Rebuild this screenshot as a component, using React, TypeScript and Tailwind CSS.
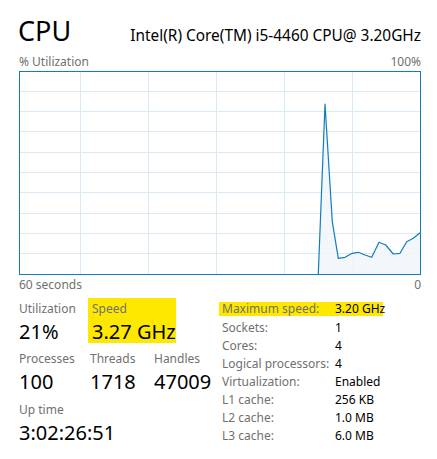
import React from "react";

const pts: [number, number][] = [
  [299.3, 203],
  [306, 33],
  [313.3, 150.7],
  [319.3, 187.3],
  [326, 186.3],
  [333.3, 182.3],
  [339.3, 181.3],
  [346, 184],
  [352.7, 186.3],
  [360, 171.3],
  [366.7, 174],
  [374.3, 183],
  [381, 182.3],
  [387.7, 170.7],
  [394.3, 167.3],
  [401, 161.7],
];

function Chart() {
  const vx = [61.5, 129.5, 197.5, 265.5, 333.5];
  const hy = [20.5, 40.5, 60.5, 81.5, 101.5, 121.5, 142.5, 162.5, 182.5];
  const line = pts.map((p) => p.join(",")).join(" ");
  const area = `${line} 401,203 299.3,203`;
  return (
    <svg width="402" height="204" viewBox="0 0 402 204" className="block">
      <rect x="0" y="0" width="402" height="204" fill="#ffffff" />
      {vx.map((x) => (
        <line key={x} x1={x} y1={0} x2={x} y2={204} stroke="#d9eaf4" strokeWidth="1" />
      ))}
      {hy.map((y) => (
        <line key={y} x1={0} y1={y} x2={402} y2={y} stroke="#d9eaf4" strokeWidth="1" />
      ))}
      <polygon points={area} fill="#f1f6fa" fillOpacity="0.85" />
      <polyline points={line} fill="none" stroke="#117dbb" strokeWidth="1.2" strokeLinejoin="round" />
      <rect x="0.5" y="0.5" width="401" height="203" fill="none" stroke="#117dbb" strokeWidth="1" />
    </svg>
  );
}

function Stat({ label, value, className = "" }: { label: string; value: string; className?: string }) {
  return (
    <div className={className}>
      <div className="text-[12px] leading-[14px] text-[#707070] whitespace-nowrap">{label}</div>
      <div className="text-[20px] leading-[24px] text-black mt-[4px] whitespace-nowrap">{value}</div>
    </div>
  );
}

const rows: [string, string][] = [
  ["Sockets:", "1"],
  ["Cores:", "4"],
  ["Logical processors:", "4"],
  ["Virtualization:", "Enabled"],
  ["L1 cache:", "256 KB"],
  ["L2 cache:", "1.0 MB"],
  ["L3 cache:", "6.0 MB"],
];

export default function App() {
  return (
    <div
      className="w-[437px] h-[459px] bg-white overflow-hidden pl-[19px] pr-[16px]"
      style={{ fontFamily: '"Noto Sans", "Open Sans", sans-serif' }}
    >
      <div className="flex items-baseline justify-between pt-[14px] h-[52px]">
        <div className="text-[27px] leading-[34px] text-black -ml-[1px]">CPU</div>
        <div className="text-[15.4px] leading-[20px] text-black whitespace-nowrap">Intel(R) Core(TM) i5-4460 CPU@ 3.20GHz</div>
      </div>
      <div className="flex justify-between text-[12px] leading-[16px] text-[#707070] mt-[2px]">
        <span>% Utilization</span>
        <span>100%</span>
      </div>
      <div className="mt-[1px]">
        <Chart />
      </div>
      <div className="flex justify-between text-[12px] leading-[16px] text-[#707070] mt-[2px]">
        <span>60 seconds</span>
        <span>0</span>
      </div>
      <div className="flex mt-[5px]">
        <div className="w-[200px]">
          <div className="flex">
            <Stat label="Utilization" value="21%" className="w-[69px] pt-[4px]" />
            <div className="bg-[#ffe800] w-[88px] h-[45px] pl-[4px] pt-[4px]">
              <div className="text-[12px] leading-[14px] text-[#707070]">Speed</div>
              <div className="text-[20px] leading-[24px] text-black mt-[4px] whitespace-nowrap">3.27 GHz</div>
            </div>
          </div>
          <div className="flex mt-[8px]">
            <Stat label="Processes" value="100" className="w-[71px]" />
            <Stat label="Threads" value="1718" className="w-[64px]" />
            <Stat label="Handles" value="47009" />
          </div>
          <Stat label="Up time" value="3:02:26:51" className="mt-[9px]" />
        </div>
        <div className="pt-[4px]">
          <div className="flex bg-[#ffe800] w-[164px] h-[14px] items-center text-[12px] whitespace-nowrap">
            <span className="w-[116px] shrink-0 pl-[3px] text-[#707070]">Maximum speed:</span>
            <span className="text-black">3.20 GHz</span>
          </div>
          <div className="mt-[3px]">
            {rows.map(([k, v]) => (
              <div key={k} className="flex h-[18px] items-center text-[12px] whitespace-nowrap">
                <span className="w-[116px] shrink-0 pl-[3px] text-[#707070]">{k}</span>
                <span className="text-black">{v}</span>
              </div>
            ))}
          </div>
        </div>
      </div>
    </div>
  );
}
